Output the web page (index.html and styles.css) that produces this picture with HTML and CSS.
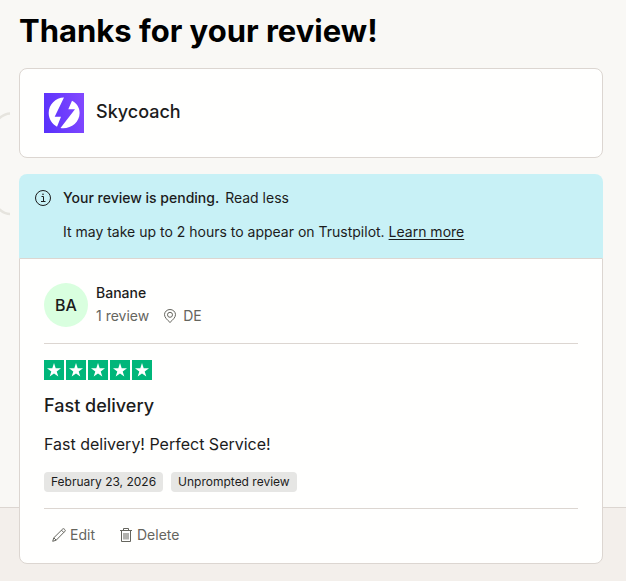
FILE: index.html
```html
<!DOCTYPE html>
<html lang="en">
<head>
    <meta charset="UTF-8">
    <meta name="viewport" content="width=device-width, initial-scale=1.0">
    <title>Thanks for your review!</title>
    <link rel="stylesheet" href="styles.css">
</head>
<body>
    <svg class="bg-arc" width="10" height="104" viewBox="0 0 10 104" fill="none" stroke="#e6e4de" stroke-width="2.500" aria-hidden="true">
        <path d="M10 1.500C6 1.500 3 3 -1 6.500M10 102C6 102 3 100.500 -1 97"/>
    </svg>
    <main class="page">
        <h1>Thanks for your review!</h1>

        <section class="card company">
            <svg class="company-logo" width="40" height="40" viewBox="0 0 40 40" role="img" aria-label="Skycoach logo">
                <defs>
                    <linearGradient id="logo-bg" x1="0" y1="0.6" x2="1" y2="0.4">
                        <stop offset="0" stop-color="#5a32fb"/>
                        <stop offset="1" stop-color="#8148ff"/>
                    </linearGradient>
                </defs>
                <rect width="40" height="40" fill="url(#logo-bg)"/>
                <path fill="#fff" d="M20 4.500C11.500 4.700 4.700 11.500 4.700 20C4.700 26 8 31 13 33.700L17 23.800H10.700Z"/>
                <path fill="#fff" d="M28 7.800L24.300 16.300H31L16.500 35.100C26.500 36.500 35.600 29.500 35.600 20C35.600 14.500 32.800 10.500 28 7.800Z"/>
            </svg>
            <h2>Skycoach</h2>
        </section>

        <article class="review">
            <div class="notice">
                <svg class="notice-icon" width="16" height="16" viewBox="0 0 16 16" fill="none" stroke="#1c1c1c" aria-hidden="true">
                    <circle cx="8" cy="8" r="7.500"/>
                    <path d="M6.500 6.500H8.500V11.500M6 11.500H10.500"/>
                    <circle cx="8" cy="4.200" r="0.800" fill="#1c1c1c" stroke="none"/>
                </svg>
                <div class="notice-text">
                    <p><strong>Your review is pending.</strong> <button class="toggle" type="button">Read less</button></p>
                    <p>It may take up to 2 hours to appear on Trustpilot. <a href="#">Learn more</a></p>
                </div>
            </div>

            <div class="review-body">
                <header class="consumer">
                    <div class="avatar">BA</div>
                    <div class="consumer-info">
                        <div class="consumer-name">Banane</div>
                        <div class="consumer-details">
                            <span>1 review</span>
                            <span class="country">
                                <svg width="14" height="14" viewBox="0 0 14 14" fill="none" stroke="#65655e" aria-hidden="true">
                                    <path d="M7 13.500C4.500 11 1.500 8.500 1.500 5.700A5.500 5.200 0 0 1 12.500 5.700C12.500 8.500 9.500 11 7 13.500Z"/>
                                    <circle cx="7" cy="5.800" r="2.500"/>
                                </svg>
                                DE
                            </span>
                        </div>
                    </div>
                </header>

                <svg class="stars" width="108" height="20" viewBox="0 0 108 20" role="img" aria-label="Rated 5 out of 5 stars">
                    <defs>
                        <g id="star">
                            <rect width="20" height="20" fill="#00b67a"/>
                            <path fill="#fff" d="M10 3L11.700 8.200H17L12.700 11.400L14.300 16.500L10 13.400L5.700 16.500L7.300 11.400L3 8.200H8.300Z"/>
                        </g>
                    </defs>
                    <use href="#star"/>
                    <use href="#star" x="22"/>
                    <use href="#star" x="44"/>
                    <use href="#star" x="66"/>
                    <use href="#star" x="88"/>
                </svg>

                <h2>Fast delivery</h2>
                <p class="review-text">Fast delivery! Perfect Service!</p>

                <div class="tags">
                    <span class="tag">February 23, 2026</span>
                    <span class="tag">Unprompted review</span>
                </div>

                <footer class="actions">
                    <button type="button">
                        <svg width="14" height="14" viewBox="0 0 14 14" fill="none" stroke="#65655e" aria-hidden="true">
                            <path d="M0.700 13.300L1.800 9.800L10.800 0.900Q11.500 0.400 12.200 1L13 1.800Q13.600 2.500 13 3.200L4.200 12.200ZM1.800 9.800L4.200 12.200M9.500 2.200L11.800 4.500"/>
                        </svg>
                        Edit
                    </button>
                    <button type="button">
                        <svg width="14" height="14" viewBox="0 0 14 14" fill="none" stroke="#65655e" aria-hidden="true">
                            <path d="M1 2.500H13M4.500 2.500V0.500H9.500V2.500M2.500 2.500V13.500H11.500V2.500M5 5V11.500M7 5V11.500M9 5V11.500"/>
                        </svg>
                        Delete
                    </button>
                </footer>
            </div>
        </article>
    </main>
</body>
</html>
```
FILE: styles.css
```css
* {
    box-sizing: border-box;
}
body {
    margin: 0;
    font-family: Inter, "Liberation Sans", sans-serif;
    font-size: 14px;
    line-height: 20px;
    color: #1c1c1c;
    background-color: #f9f8f5;
}
h1, h2, p {
    margin: 0;
}
button {
    padding: 0;
    border: none;
    background: none;
    font: inherit;
    color: inherit;
    cursor: pointer;
}
.bg-arc {
    position: absolute;
    top: 112px;
    left: 0;
}
.page {
    position: relative;
    padding: 11px 23px 17px 19px;
}
/* darker band behind the bottom of the review */
.page::before {
    content: "";
    position: absolute;
    z-index: -1;
    left: 0;
    right: 0;
    bottom: 0;
    height: 73px;
    border-top: 1px solid #dcd6d1;
    background-color: #f3efeb;
}
h1 {
    margin-bottom: 17px;
    font-size: 31px;
    line-height: 40px;
    color: #000;
}
h2 {
    font-size: 18px;
    line-height: 24px;
    font-weight: 500;
}
.card {
    border: 1px solid #dcd6d1;
    border-radius: 8px;
    background-color: #fffffe;
}
.company {
    display: flex;
    gap: 12px;
    margin-bottom: 16px;
    padding: 24px;
}
.company h2 {
    margin-top: 7px;
}
.notice {
    display: flex;
    gap: 12px;
    padding: 14px 16px;
    border-radius: 8px 8px 0 0;
    background-color: #c8f1f6;
}
.notice-icon {
    flex: none;
    margin-top: 2px;
}
.notice-text {
    display: flex;
    flex-direction: column;
    gap: 14px;
    padding-bottom: 2px;
}
.notice strong {
    margin-right: 2px;
    font-weight: 500;
}
.notice a {
    color: inherit;
    text-underline-offset: 2px;
}
.review-body {
    padding: 24px 24px 18px;
    border: 1px solid #dcd6d1;
    border-radius: 0 0 8px 8px;
    background-color: #fffffe;
}
.consumer {
    display: flex;
    gap: 8px;
    padding-bottom: 16px;
    border-bottom: 1px solid #dcd6d1;
}
.avatar {
    width: 44px;
    height: 44px;
    border-radius: 50%;
    background-color: #d9ffdf;
    font-size: 16px;
    line-height: 44px;
    font-weight: 500;
    text-align: center;
}
.consumer-name {
    margin-bottom: 3px;
    font-weight: 500;
}
.consumer-details {
    display: flex;
    gap: 14px;
    color: #65655e;
}
.country {
    display: flex;
    align-items: center;
    gap: 6px;
}
.stars {
    display: block;
    margin: 16px 0 14px;
}
.review-text {
    margin-top: 14px;
    font-size: 16px;
    line-height: 24px;
}
.tags {
    display: flex;
    gap: 8px;
    margin: 16px 0;
}
.tag {
    padding: 0 7px;
    border-radius: 4px;
    background-color: #e6e6e4;
    font-size: 12px;
}
.actions {
    display: flex;
    gap: 24px;
    padding: 16px 8px 0;
    border-top: 1px solid #dcd6d1;
    color: #65655e;
}
.actions button {
    display: flex;
    align-items: center;
    gap: 4px;
}
```
